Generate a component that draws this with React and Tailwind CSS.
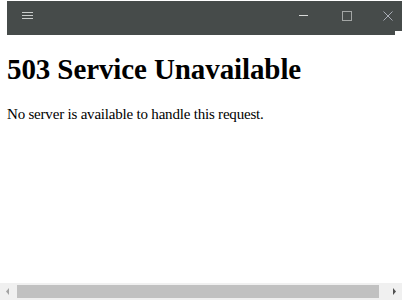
import React from 'react';

// Browser-ish window: dark title bar, plain error page, horizontal scrollbar
const TitleBar = () => (
    <div className="relative h-[35px] pt-px">
        <div className="ml-[7px] h-[30px] bg-[#464b4a] flex items-center">
            {/* hamburger */}
            <svg width="12" height="8" className="ml-[15px]" viewBox="0 0 12 8">
                <path d="M0 0.5H11M0 3.5H11M0 6.5H11" stroke="#c9cccb" strokeWidth="1" />
            </svg>
            <div className="flex-1" />
            {/* minimize */}
            <svg width="10" height="10" className="mr-[33px]" viewBox="0 0 10 10">
                <path d="M0 4.5H9" stroke="#d8dad9" strokeWidth="1" />
            </svg>
            {/* maximize */}
            <svg width="10" height="10" className="mr-[31px]" viewBox="0 0 10 10">
                <rect x="0.5" y="0.5" width="9" height="9" fill="none" stroke="#a3a6a5" strokeWidth="1" />
            </svg>
            {/* close */}
            <svg width="10" height="10" className="mr-[9px]" viewBox="0 0 10 10">
                <path d="M0.5 0.5L9.5 9.5M9.5 0.5L0.5 9.5" stroke="#a9adb6" strokeWidth="1" />
            </svg>
        </div>
        <div className="ml-[7px] mr-[7px] h-[4px] bg-[#464b4a]" />
    </div>
);

const ScrollBar = () => (
    <div className="h-[17px] bg-[#f0f0f0] flex items-center">
        <svg width="17" height="17" viewBox="0 0 17 17">
            <path d="M9 5L6 8.5L9 12Z" fill="#a3a3a3" />
        </svg>
        <div className="flex-1 h-[13px] bg-[#c1c1c1] mr-[6px]" />
        <svg width="17" height="17" viewBox="0 0 17 17">
            <path d="M8 5L11 8.5L8 12Z" fill="#505050" />
        </svg>
    </div>
);

export default function App() {
    return (
        <div className="w-[402px] h-[300px] bg-white flex flex-col overflow-hidden font-['Liberation_Serif',serif] text-black">
            <TitleBar />
            <div className="flex-1 px-[7px]">
                <h1 className="mt-[16px] text-[29px] leading-[36px] font-bold tracking-[-0.1px]">503 Service Unavailable</h1>
                <p className="mt-[18px] text-[15px] leading-[18px] tracking-[-0.2px]">No server is available to handle this request.</p>
            </div>
            <ScrollBar />
        </div>
    );
}
